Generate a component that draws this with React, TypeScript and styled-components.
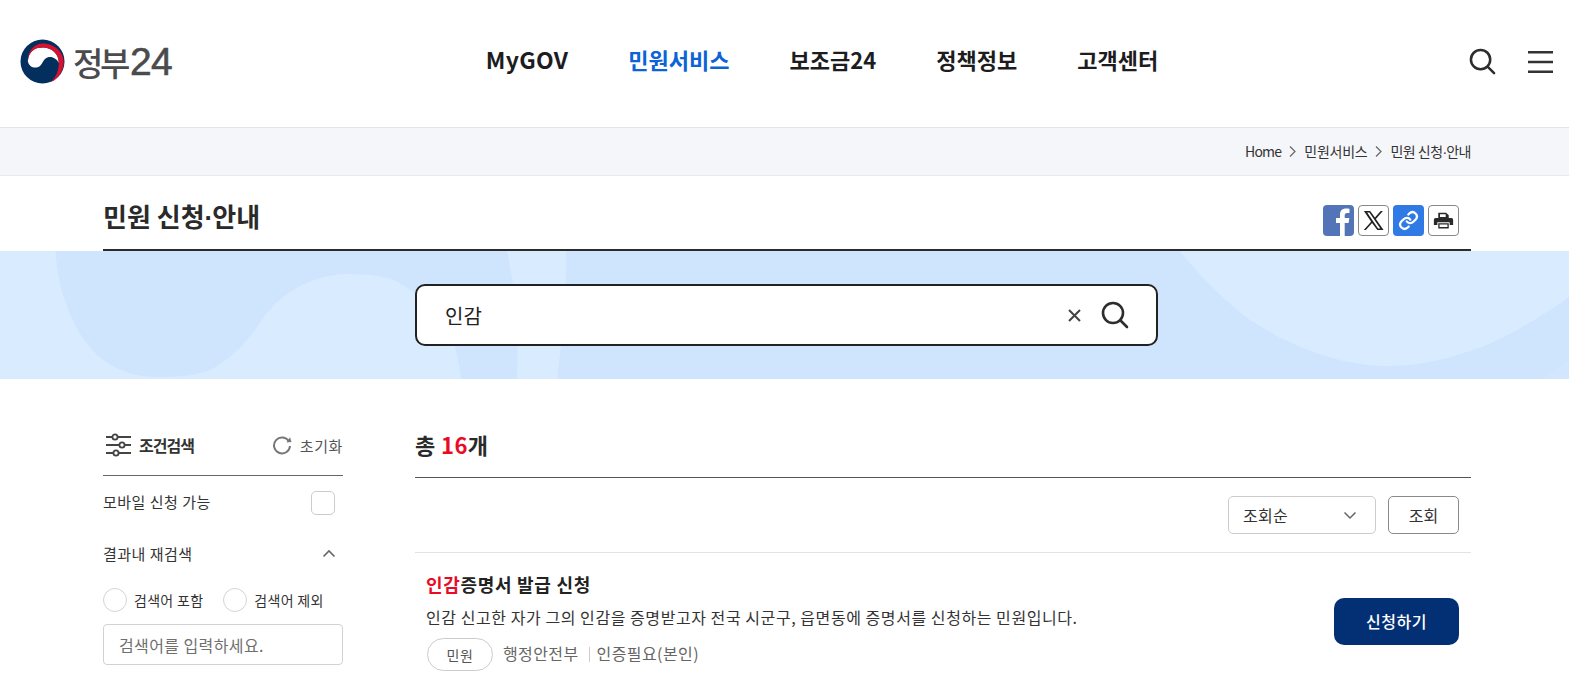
import React from "react";
import styled, { createGlobalStyle } from "styled-components";

const Global = createGlobalStyle`
  html, body { margin: 0; padding: 0; height: 690px; overflow: hidden; background: #fff; }
  body { font-family: "Noto Sans CJK KR", "Noto Sans", sans-serif; color: #222; }
  * { box-sizing: border-box; }
`;

const Page = styled.div`height: 690px; overflow: hidden;`;

const Header = styled.header`
  height: 128px;
  border-bottom: 1px solid #e1e4ea;
  display: grid;
  grid-template-columns: 1fr auto 1fr;
  align-items: center;
  padding: 0 16px 4px 20px;
`;
const Logo = styled.a`display: flex; align-items: center; gap: 8px;`;
const LogoText = styled.span`
  font-size: 33px;
  font-weight: 500;
  letter-spacing: -3.4px;
  line-height: 44px;
  color: #4b4b4d;
`;
const LogoNum = styled.span`
  font-family: "Liberation Sans", Arial, sans-serif;
  font-size: 39px;
  letter-spacing: -0.5px;
  line-height: 44px;
  margin-left: 3px;
  color: #4b4b4d;
  -webkit-text-stroke: 0.6px #4b4b4d;
`;
const LogoWord = styled.span`display: flex; align-items: center;`;
const Nav = styled.nav`display: flex; gap: 60px; margin-left: 71px; padding-bottom: 6px;`;
const NavItem = styled.a<{ $active?: boolean; $latin?: boolean }>`
  font-size: ${(p) => (p.$latin ? "23px" : "22px")};
  font-weight: 700;
  letter-spacing: ${(p) => (p.$latin ? "0.3px" : "0")};
  line-height: 32px;
  color: ${(p) => (p.$active ? "#0b63d6" : "#1d1d1f")};
`;
const HeaderIcons = styled.div`display: flex; justify-content: flex-end; align-items: center; gap: 32px;`;

const Crumbs = styled.div`
  height: 48px;
  background: #f5f6fa;
  border-bottom: 1px solid #e8eaef;
  display: flex;
  align-items: center;
  justify-content: flex-end;
  padding: 0 98px 2px 0;
  font-size: 14px;
  letter-spacing: -0.25px;
  color: #333;
  gap: 8px;
`;
const CrumbHome = styled.span`letter-spacing: -0.8px;`;
const CrumbLast = styled.span`letter-spacing: -0.5px;`;
const Mid = styled.span`font-family: "Liberation Sans", Arial, sans-serif; letter-spacing: -1px;`;

const TitleRow = styled.div`
  height: 75px;
  margin: 0 98px 0 103px;
  border-bottom: 2px solid #2b2b2b;
  display: flex;
  align-items: center;
  justify-content: space-between;
  padding-right: 12px;
`;
const Title = styled.h1`
  margin: 8px 0 0;
  font-size: 26px;
  font-weight: 700;
  letter-spacing: 0;
  line-height: 38px;
  color: #2a2a2a;
`;
const Share = styled.div`display: flex; gap: 4px; margin-top: 16px;`;
const ShareBtn = styled.span<{ $bg?: string; $line?: boolean }>`
  width: 31px;
  height: 31px;
  border-radius: 4px;
  overflow: hidden;
  display: flex;
  align-items: center;
  justify-content: center;
  background: ${(p) => p.$bg || "#fff"};
  border: ${(p) => (p.$line ? "1px solid #888" : "none")};
`;

const Banner = styled.section`
  position: relative;
  height: 128px;
  background: #cfe5fe;
  display: flex;
  align-items: center;
  justify-content: center;
  overflow: hidden;
`;
const BannerArt = styled.svg`position: absolute; inset: 0; width: 100%; height: 100%;`;
const SearchBox = styled.div`
  position: relative;
  width: 743px;
  height: 62px;
  margin: 0 0 0 4px;
  background: #fff;
  border: 2px solid #222;
  border-radius: 10px;
  display: flex;
  align-items: center;
  padding: 0 27px 0 28px;
`;
const SearchText = styled.span`flex: 1; font-size: 20px; color: #222;`;
const SearchIcons = styled.div`display: flex; align-items: center; gap: 20px;`;

const Body = styled.div`
  display: grid;
  grid-template-columns: 240px 1056px;
  gap: 72px;
  margin-left: 103px;
`;
const Side = styled.aside`padding-top: 50px;`;
const SideHead = styled.div`
  height: 47px;
  padding: 0 0 14px 2px;
  border-bottom: 1px solid #666;
  display: flex;
  align-items: center;
  justify-content: space-between;
`;
const SideTitle = styled.div`
  display: flex; align-items: center; gap: 7px;
  font-size: 16px; font-weight: 700; letter-spacing: -1px; color: #333;
`;
const Reset = styled.div`
  display: flex; align-items: center; gap: 8px;
  font-size: 15px; letter-spacing: 0.6px; color: #555;
`;
const SideRow = styled.div<{ $h: number }>`
  height: ${(p) => p.$h}px;
  display: flex;
  align-items: center;
  justify-content: space-between;
  font-size: 15px;
  letter-spacing: 0.5px;
  color: #333;
`;
const RowLabel = styled.span`padding-bottom: 3px;`;
const Check = styled.span`
  width: 24px; height: 24px; margin-right: 8px;
  background: #fff;
  border: 1px solid #ccc; border-radius: 5px;
`;
const Radios = styled.div`display: flex; align-items: center; height: 24px; margin-top: 11px; gap: 20px;`;
const RadioLabel = styled.label`
  display: flex; align-items: center; gap: 7px;
  font-size: 14px; letter-spacing: 0.3px; color: #333;
`;
const RadioDot = styled.span`width: 24px; height: 24px; border-radius: 50%; border: 1px solid #d4d4d4;`;
const SideInput = styled.div`
  height: 41px;
  margin-top: 12px;
  border: 1px solid #d2d2d2;
  border-radius: 4px;
  padding-left: 15px;
  display: flex;
  align-items: center;
  font-size: 16px;
  letter-spacing: 0.4px;
  color: #6f6f6f;
`;

const Main = styled.main`padding-top: 46px;`;
const Total = styled.div`
  height: 53px;
  padding-top: 1px;
  border-bottom: 1px solid #555;
  font-size: 22px;
  font-weight: 700;
  letter-spacing: 0.4px;
  line-height: 36px;
  color: #2a2a2a;
`;
const Red = styled.em`font-style: normal; color: #eb0a26;`;
const SortRow = styled.div`
  height: 75px;
  padding: 18px 12px 0 0;
  border-bottom: 1px solid #e3e3e3;
  display: flex;
  justify-content: flex-end;
  gap: 12px;
`;
const Select = styled.div`
  width: 148px; height: 38px;
  border: 1px solid #ccc; border-radius: 5px;
  display: flex; align-items: center; justify-content: space-between;
  padding: 0 18px 0 14px;
  font-size: 16px; letter-spacing: 0.3px; color: #333;
`;
const Btn = styled.div`
  width: 71px; height: 38px;
  border: 1px solid #8a8a8a; border-radius: 5px;
  display: flex; align-items: center; justify-content: center;
  font-size: 16px; color: #333;
`;
const Item = styled.article`
  display: flex;
  justify-content: space-between;
  align-items: center;
  padding: 16px 12px 0 11px;
`;
const ItemTitle = styled.div`
  font-size: 18px; font-weight: 700; letter-spacing: 0.7px; line-height: 30px; color: #222;
`;
const ItemDesc = styled.div`
  font-size: 16px; letter-spacing: 0.56px; line-height: 32px; color: #333; margin: 2px 0 5px;
`;
const Meta = styled.div`display: flex; align-items: center; font-size: 16px; letter-spacing: 0.4px; color: #666;`;
const MetaText = styled.span`padding-bottom: 3px;`;
const Pill = styled.span`
  width: 66px; height: 33px; margin: 0 10px 0 1px;
  border: 1px solid #ccc; border-radius: 17px;
  display: flex; align-items: center; justify-content: center;
  font-size: 14px; letter-spacing: 0.5px; color: #555;
`;
const Sep = styled.i`width: 1px; height: 15px; background: #ccc; margin: 0 7px 0 10px;`;
const Apply = styled.div`
  width: 125px; height: 47px; margin-top: 2px;
  background: #033075; border-radius: 10px;
  color: #fff; font-size: 16px; font-weight: 500; letter-spacing: 0.5px;
  display: flex; align-items: center; justify-content: center;
`;

const Emblem = () => (
  <svg width="45" height="45" viewBox="0 0 45 45">
    <circle cx="22.5" cy="22.5" r="22" fill="#032f5e" />
    <path d="M7.800 22C9 11 16 8.500 22.800 8.500 32 8.500 39 15 38.800 24 37 20 33 17.500 29 18 24 18.500 23 24 20 27 16 30 9 29 7.800 22Z" fill="#fff" />
    <path d="M7.800 22C7.500 11 15 4.500 22.800 4.500 34 4.500 43.700 13 43.700 23 43.700 32 38 40 31 43 36 38 39 31 38.800 24 39 15 32 8.500 22.800 8.500 16 8.500 9 11 7.800 22Z" fill="#d8112f" />
  </svg>
);
const BigSearch = ({ s, w }: { s: number; w: number }) => (
  <svg width={s} height={s} viewBox="0 0 28 28" fill="none" stroke="#2d2d2d" strokeWidth={w} strokeLinecap="round">
    <circle cx="12" cy="12" r="10" />
    <path d="M19.500 19.500 26 26" />
  </svg>
);
const Chevron = () => (
  <svg width="7" height="12" viewBox="0 0 7 12" fill="none" stroke="#666" strokeWidth="1.200"><path d="m1 1.500 5 5-5 5" /></svg>
);

export default function App() {
  return (
    <Page>
      <Global />
      <Header>
        <Logo>
          <Emblem />
          <LogoWord>
            <LogoText>정부</LogoText>
            <LogoNum>24</LogoNum>
          </LogoWord>
        </Logo>
        <Nav>
          <NavItem $latin>MyGOV</NavItem>
          <NavItem $active>민원서비스</NavItem>
          <NavItem>보조금24</NavItem>
          <NavItem>정책정보</NavItem>
          <NavItem>고객센터</NavItem>
        </Nav>
        <HeaderIcons>
          <BigSearch s={27} w={2.6} />
          <svg width="25" height="24" viewBox="0 0 25 24" stroke="#333" strokeWidth="2.500">
            <path d="M0 2.300h25M0 12h25M0 21.700h25" />
          </svg>
        </HeaderIcons>
      </Header>

      <Crumbs>
        <CrumbHome>Home</CrumbHome>
        <Chevron />
        <span>민원서비스</span>
        <Chevron />
        <CrumbLast>민원 신청<Mid>·</Mid>안내</CrumbLast>
      </Crumbs>

      <TitleRow>
        <Title>민원 신청<Mid>·</Mid>안내</Title>
        <Share>
          <ShareBtn $bg="#5375b8">
            <svg width="31" height="31" viewBox="0 0 31 31"><path d="M17 31V18h-4v-5h4v-3.500C17 5.500 19.500 3.500 23 3.500c1.500 0 2.800.1 3.500.2V8h-2.300c-2 0-2.500 1-2.500 2.300V13h4.600l-.7 5h-3.900v13Z" fill="#fff" /></svg>
          </ShareBtn>
          <ShareBtn $line>
            <svg width="23" height="23" viewBox="0 0 24 24"><path d="M2 2h6.500l5 6.800L19.500 2h2.300l-7.300 8.400L22.500 22H16l-5.500-7.400L4 22H1.800l7.700-8.800Zm3.400 1.600L16.800 20.400h2.300L7.700 3.600Z" fill="#222" /></svg>
          </ShareBtn>
          <ShareBtn $bg="#2f7ae5">
            <svg width="21" height="21" viewBox="0 0 24 24" fill="none" stroke="#fff" strokeWidth="2.600" strokeLinecap="round"><path d="M10 13a5 5 0 0 0 7.500.5l3-3a5 5 0 0 0-7-7l-1.700 1.700" /><path d="M14 11a5 5 0 0 0-7.500-.5l-3 3a5 5 0 0 0 7 7l1.700-1.700" /></svg>
          </ShareBtn>
          <ShareBtn $line>
            <svg width="21" height="21" viewBox="0 0 24 24"><path d="M6 3h9l3 3v3H6Z M3 9h18a2 2 0 0 1 2 2v6h-4v-3H5v3H1v-6a2 2 0 0 1 2-2Z M6 15h12v6H6Z" fill="#2a2a2a" /><path d="M8 4.800h6.500V8H8Z M7.500 16.500h9v3h-9Z" fill="#fff" /></svg>
          </ShareBtn>
        </Share>
      </TitleRow>

      <Banner>
        <BannerArt viewBox="0 0 1569 128" preserveAspectRatio="none">
          <path d="M0 0H55.500C57 20 60 38 65 49 73 75 85 93 99.500 106 118 121 140 127 161 126 180 126 200 124 214 117 232 106 248 90 260 72 270 56 283 44 298.500 36 313 28 331 23 348 23 366 23 382 25 394 29 425 45 450 75 455 96 458 108 460 118 461 128H0Z" fill="#d9ebff" />
          <path d="M507 0H566C567 40 562 90 557 128H517C519 90 516 40 507 0Z" fill="#d9ebff" />
          <path d="M1180 0C1200 26 1225 50 1250 69 1280 88 1330 115 1390 115 1430 115 1480 100 1517 79 1535 69 1552 58 1569 46V0Z" fill="#d9ebff" />
          <path d="M1543 128 1569 110V128Z" fill="#d2e7fe" />
        </BannerArt>
        <SearchBox>
          <SearchText>인감</SearchText>
          <SearchIcons>
            <svg width="13" height="13" viewBox="0 0 13 13" stroke="#444" strokeWidth="2"><path d="m1 1 11 11M12 1 1 12" /></svg>
            <BigSearch s={28} w={2.6} />
          </SearchIcons>
        </SearchBox>
      </Banner>

      <Body>
        <Side>
          <SideHead>
            <SideTitle>
              <svg width="27" height="24" viewBox="0 0 27 24" fill="#fff" stroke="#444" strokeWidth="1.800">
                <path d="M1 4h25M1 12h25M1 20h25" />
                <circle cx="10" cy="4" r="2.600" />
                <circle cx="17" cy="12" r="2.600" />
                <circle cx="11" cy="20" r="2.600" />
              </svg>
              조건검색
            </SideTitle>
            <Reset>
              <svg width="20" height="20" viewBox="0 0 20 20" fill="none" stroke="#777" strokeWidth="2">
                <path d="M17 6.500A8 8 0 1 0 18 11" />
                <path d="m14.500 7.500 5-.5-1.500-4.800Z" fill="#777" stroke="none" />
              </svg>
              초기화
            </Reset>
          </SideHead>
          <SideRow $h={54}>
            <RowLabel>모바일 신청 가능</RowLabel>
            <Check />
          </SideRow>
          <SideRow $h={47}>
            결과내 재검색
            <svg width="14" height="9" viewBox="0 0 14 9" fill="none" stroke="#666" strokeWidth="1.600" style={{ marginRight: 7 }}><path d="m1.500 7.500 5.500-5.500 5.500 5.500" /></svg>
          </SideRow>
          <Radios>
            <RadioLabel><RadioDot />검색어 포함</RadioLabel>
            <RadioLabel><RadioDot />검색어 제외</RadioLabel>
          </Radios>
          <SideInput>검색어를 입력하세요.</SideInput>
        </Side>
        <Main>
          <Total>총 <Red>16</Red>개</Total>
          <SortRow>
            <Select>
              조회순
              <svg width="14" height="9" viewBox="0 0 14 9" fill="none" stroke="#666" strokeWidth="1.500"><path d="m1.500 1.500 5.500 5.500 5.500-5.500" /></svg>
            </Select>
            <Btn>조회</Btn>
          </SortRow>
          <Item>
            <div>
              <ItemTitle><Red>인감</Red>증명서 발급 신청</ItemTitle>
              <ItemDesc>인감 신고한 자가 그의 인감을 증명받고자 전국 시군구, 읍면동에 증명서를 신청하는 민원입니다.</ItemDesc>
              <Meta>
                <Pill>민원</Pill>
                <MetaText>행정안전부</MetaText>
                <Sep />
                <MetaText>인증필요(본인)</MetaText>
              </Meta>
            </div>
            <Apply>신청하기</Apply>
          </Item>
        </Main>
      </Body>
    </Page>
  );
}
